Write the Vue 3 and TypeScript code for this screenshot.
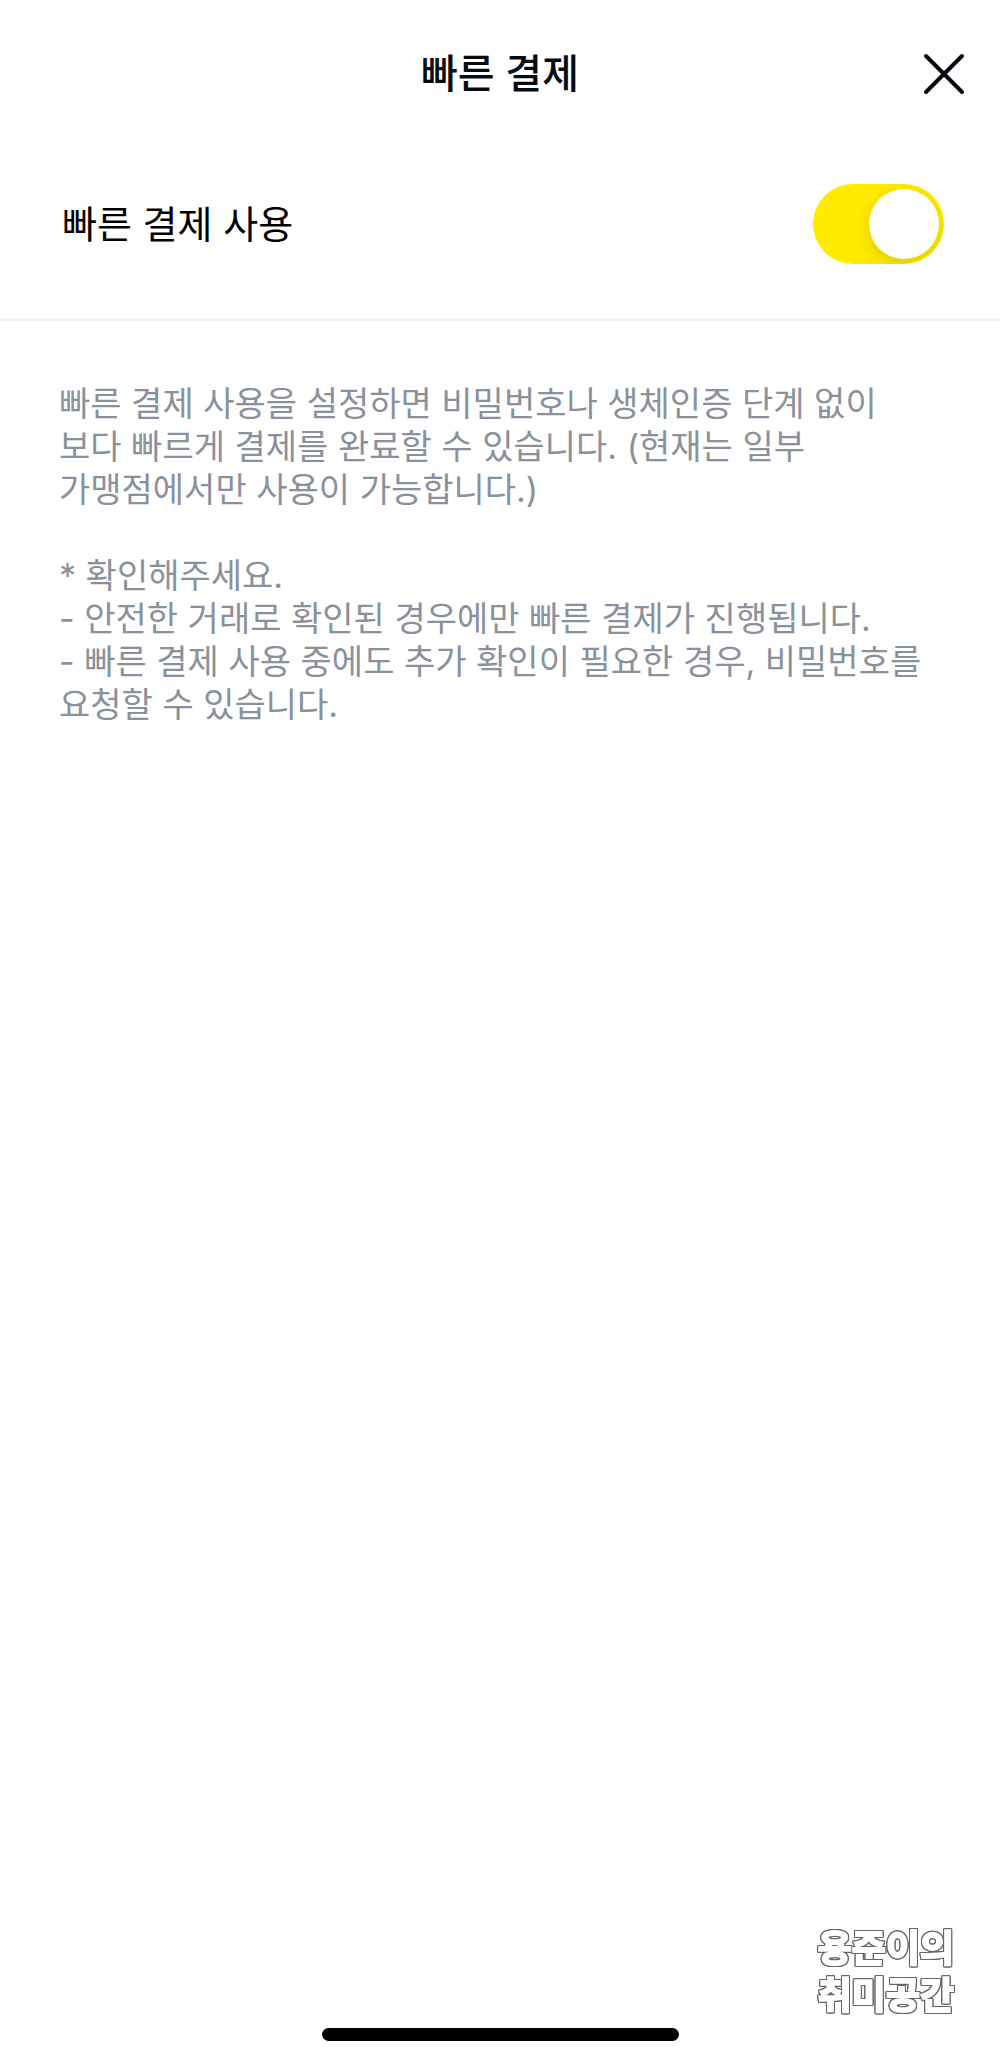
<script setup lang="ts">
import { ref } from 'vue'

const enabled = ref<boolean>(true)

const description: string[] = [
  '빠른 결제 사용을 설정하면 비밀번호나 생체인증 단계 없이',
  '보다 빠르게 결제를 완료할 수 있습니다. (현재는 일부',
  '가맹점에서만 사용이 가능합니다.)',
]

const notices: string[] = [
  '* 확인해주세요.',
  '- 안전한 거래로 확인된 경우에만 빠른 결제가 진행됩니다.',
  '- 빠른 결제 사용 중에도 추가 확인이 필요한 경우, 비밀번호를',
  '요청할 수 있습니다.',
]

const signature: string[] = ['용준이의', '취미공간']
</script>

<template>
  <div class="screen">
    <header class="header">
      <h1 class="title">빠른 결제</h1>
      <button class="close" type="button" aria-label="닫기">
        <svg width="44" height="44" viewBox="0 0 44 44" fill="none" aria-hidden="true">
          <path d="M4 4 40 40M40 4 4 40" stroke="currentColor" stroke-width="4" stroke-linecap="round" />
        </svg>
      </button>
    </header>

    <main class="content">
      <div class="setting">
        <label class="setting-label" for="quick-pay">빠른 결제 사용</label>
        <input id="quick-pay" v-model="enabled" class="toggle" type="checkbox" role="switch" />
      </div>
      <div class="guide">
        <p>{{ description.join('\n') }}</p>
        <p>{{ notices.join('\n') }}</p>
      </div>
    </main>

    <footer class="footer">
      <p class="signature">{{ signature.join('\n') }}</p>
      <div class="home-bar"></div>
    </footer>
  </div>
</template>

<style>
body {
  margin: 0;
  background: #fff;
}
</style>

<style scoped>
.screen {
  display: flex;
  flex-direction: column;
  min-height: 100vh;
  background: #fff;
  color: #060b11;
  font-family: Inter, 'Noto Sans CJK KR', sans-serif;
}

.header {
  display: grid;
  grid-template-columns: 1fr auto 1fr;
  align-items: center;
  height: 148px;
  padding: 0 24px;
}

.title {
  grid-column: 2;
  margin: 0;
  font-size: 40px;
  font-weight: 500;
  line-height: 60px;
}

.close {
  display: flex;
  justify-self: end;
  padding: 10px;
  border: 0;
  background: none;
  color: inherit;
  cursor: pointer;
}

.content {
  flex: 1;
}

.setting {
  display: flex;
  align-items: center;
  justify-content: space-between;
  padding: 36px 56px 54px 62px;
  border-bottom: 3px solid #f3f3f3;
}

.setting-label {
  color: #000;
  font-size: 38px;
  line-height: 60px;
}

.toggle {
  flex: none;
  width: 131px;
  height: 80px;
  margin: 0;
  padding: 5px;
  box-sizing: border-box;
  overflow: hidden;
  appearance: none;
  border-radius: 40px;
  background: #e4e4e4;
  cursor: pointer;
}

.toggle::before {
  content: '';
  display: block;
  width: 70px;
  height: 70px;
  border-radius: 50%;
  background: #fff;
  box-shadow: 0 6px 18px rgba(0, 0, 0, 0.13);
}

.toggle:checked {
  background: #ffea00;
}

.toggle:checked::before {
  margin-left: auto;
}

.guide {
  padding: 61px 40px 61px 59px;
  color: #8a919c;
  font-size: 34px;
  line-height: 43px;
  white-space: pre-line;
}

.guide p {
  margin: 0;
}

.guide p + p {
  margin-top: 43px;
}

.footer {
  display: flex;
  flex-direction: column;
  padding-bottom: 20px;
}

.signature {
  align-self: flex-end;
  margin: 0 46px 9px 0;
  color: #fff;
  font-size: 37px;
  font-weight: 700;
  line-height: 47px;
  white-space: pre-line;
  -webkit-text-stroke: 2px #fff;
  filter: drop-shadow(1px 0 0 #666) drop-shadow(-1px 0 0 #666) drop-shadow(0 1px 0 #666)
    drop-shadow(0 -1px 0 #666);
}

.home-bar {
  align-self: center;
  width: 357px;
  height: 13px;
  border-radius: 7px;
  background: #000;
}
</style>
